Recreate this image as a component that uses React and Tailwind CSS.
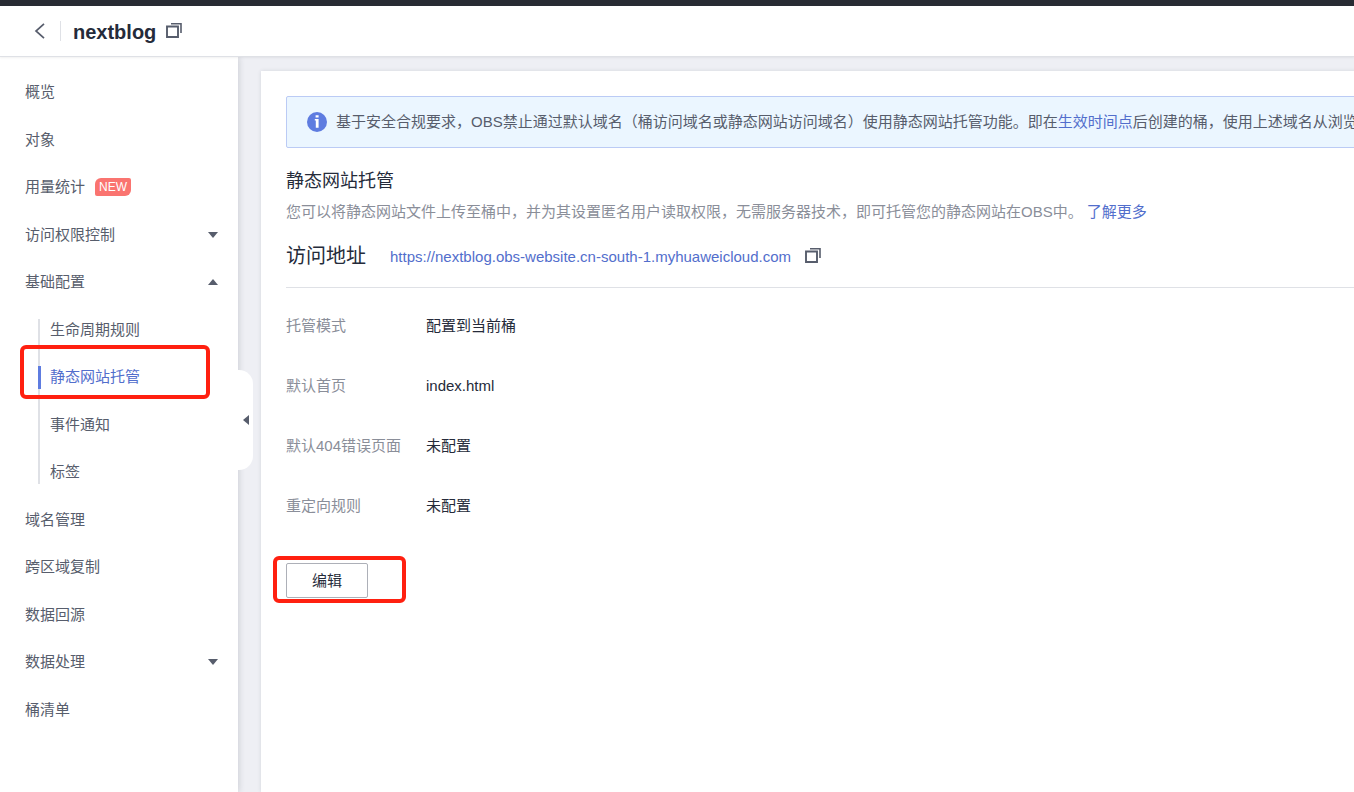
import { useState } from "react";

const NAV_ITEMS = [
  { label: "概览" },
  { label: "对象" },
  { label: "用量统计", isNew: true },
  { label: "访问权限控制", expandable: true },
  {
    label: "基础配置",
    expandable: true,
    children: ["生命周期规则", "静态网站托管", "事件通知", "标签"],
  },
  { label: "域名管理" },
  { label: "跨区域复制" },
  { label: "数据回源" },
  { label: "数据处理", expandable: true },
  { label: "桶清单" },
];

const SETTINGS = [
  { label: "托管模式", value: "配置到当前桶" },
  { label: "默认首页", value: "index.html" },
  { label: "默认404错误页面", value: "未配置" },
  { label: "重定向规则", value: "未配置" },
];

const SITE_URL = "https://nextblog.obs-website.cn-south-1.myhuaweicloud.com";

function CopyIcon() {
  return (
    <svg className="block w-4 h-4" viewBox="0 0 16 16" fill="none" stroke="#575d6c">
      <path d="M1 3.5h11v10.5H1z" strokeWidth="1.9" />
      <path d="M5 .8h10v9.2" strokeWidth="1.6" />
    </svg>
  );
}

function Caret({ up }) {
  return (
    <svg className="w-[10px] h-[6px]" viewBox="0 0 10 6" fill="#575d6c">
      {up ? <path d="M5 0l5 6H0z" /> : <path d="M0 0h10L5 6z" />}
    </svg>
  );
}

function Header() {
  return (
    <header className="relative z-20 flex items-center h-[51px] pl-8 bg-white border-b border-[#dfe1e6] shadow-[0_1px_2px_rgba(0,0,0,0.06)]">
      <button type="button" aria-label="返回" className="w-4 h-4">
        <svg className="block w-4 h-4" viewBox="0 0 16 16" fill="none" stroke="#575d6c" strokeWidth="1.7">
          <path d="M12 .8L4 8l8 7.2" />
        </svg>
      </button>
      <span className="w-px h-5 ml-3 mr-3 bg-[#dfe1e6]" />
      <h1 className="pt-[2px] text-[20px] leading-6 font-bold text-[#252b3a]">nextblog</h1>
      <button type="button" aria-label="复制桶名" className="ml-[10px]">
        <CopyIcon />
      </button>
    </header>
  );
}

function SubNav({ items, active, onSelect }) {
  return (
    <ul className="relative ml-[38px]">
      {/* Guide line on the left of the second level */}
      <li aria-hidden="true" className="absolute left-0 top-[13px] bottom-[12px] w-[2px] bg-[#dfe1e6]" />
      {items.map((label) => {
        const isActive = label === active;
        return (
          <li key={label} className="relative flex items-center h-12 even:h-[47px]">
            {isActive && <span className="absolute left-0 w-[3px] h-[23px] bg-[#5e7ce0]" />}
            <a
              href="#"
              onClick={() => onSelect(label)}
              className={`pl-3 ${isActive ? "text-[#526ecc]" : "text-[#575d6c]"}`}
            >
              {label}
            </a>
            {isActive && (
              <span className="absolute -left-[18px] -top-2 w-[190px] h-[54px] rounded-md border-4 border-[#ff2010]" />
            )}
          </li>
        );
      })}
    </ul>
  );
}

function Sidebar() {
  const [active, setActive] = useState("静态网站托管");
  const [open, setOpen] = useState("基础配置");

  return (
    <aside className="relative z-10 shrink-0 w-[238px] pt-[11px] bg-white shadow-[1px_0_6px_rgba(37,43,58,0.16)]">
      <nav>
        <ul>
          {NAV_ITEMS.map((item) => (
            <li key={item.label} className="group">
              <div className="flex items-center h-12 group-even:h-[47px] pl-[25px] pr-5 text-[#575d6c]">
                {item.expandable ? (
                  <button
                    type="button"
                    onClick={() => setOpen(open === item.label ? "" : item.label)}
                    className="flex items-center justify-between w-full"
                  >
                    {item.label}
                    <Caret up={open === item.label} />
                  </button>
                ) : (
                  <a href="#">{item.label}</a>
                )}
                {item.isNew && (
                  <span className="ml-[10px] px-1 h-[18px] rounded-tl-md rounded-br-md rounded-tr-xs rounded-bl-xs bg-[#fa7470] text-[12px] leading-[18px] text-white">
                    NEW
                  </span>
                )}
              </div>
              {item.children && open === item.label && (
                <SubNav items={item.children} active={active} onSelect={setActive} />
              )}
            </li>
          ))}
        </ul>
      </nav>

      {/* Collapse handle hanging off the edge */}
      <button
        type="button"
        aria-label="收起菜单"
        className="absolute left-full top-[313px] flex items-center pl-[5px] w-[15px] h-[100px] rounded-r-[14px] bg-white"
      >
        <svg className="w-[6px] h-[10px]" viewBox="0 0 6 10" fill="#575d6c">
          <path d="M6 0v10L0 5z" />
        </svg>
      </button>
    </aside>
  );
}

function Notice() {
  return (
    <div className="flex items-center h-[52px] pl-5 rounded-xs border border-[#bbcbf5] bg-[#ebf6ff] text-[#575d6c] whitespace-nowrap">
      <svg className="shrink-0 w-5 h-5 mr-[9px]" viewBox="0 0 20 20">
        <circle cx="10" cy="10" r="10" fill="#5e7ce0" />
        <path d="M8.6 3.2h3v2.4h-3zM7.8 7h3.8v8.8H8.8V8.4h-1z" fill="#fff" />
      </svg>
      <p>
        基于安全合规要求，OBS禁止通过默认域名（桶访问域名或静态网站访问域名）使用静态网站托管功能。即在
        <a href="#" className="text-[#526ecc]">生效时间点</a>
        后创建的桶，使用上述域名从浏览
      </p>
    </div>
  );
}

export default function App() {
  return (
    <div
      lang="zh-CN"
      className="flex flex-col min-h-screen overflow-hidden bg-[#eeeff4] border-t-6 border-[#282b33] text-[15px] leading-5 font-['Liberation_Sans','Noto_Sans_CJK_SC',sans-serif]"
    >
      <Header />
      <div className="flex flex-1">
        <Sidebar />
        <main className="flex-1 min-w-0 pl-[23px] pt-[14px] flex">
          <section className="shrink-0 w-full min-w-[1200px] px-[25px] pt-[25px] bg-white shadow-[0_0_4px_rgba(37,43,58,0.12)]">
            <Notice />

            <h2 className="mt-[21px] text-[18px] leading-6 text-[#252b3a]">静态网站托管</h2>
            <p className="mt-[9px] text-[#8a8e99]">
              您可以将静态网站文件上传至桶中，并为其设置匿名用户读取权限，无需服务器技术，即可托管您的静态网站在OBS中。
              <a href="#" className="ml-1 text-[#526ecc]">了解更多</a>
            </p>

            <div className="flex items-center mt-[22px] pb-[19px] border-b border-[#dfe1e6]">
              <h2 className="text-[20px] leading-6 text-[#252b3a]">访问地址</h2>
              <a href={SITE_URL} className="ml-6 pt-[2px] text-[#526ecc]">{SITE_URL}</a>
              <button type="button" aria-label="复制访问地址" className="ml-[14px]">
                <CopyIcon />
              </button>
            </div>

            <dl className="mt-7 flex flex-col gap-10">
              {SETTINGS.map(({ label, value }) => (
                <div key={label} className="flex">
                  <dt className="w-[140px] text-[#8a8e99]">{label}</dt>
                  <dd className="text-[#252b3a]">{value}</dd>
                </div>
              ))}
            </dl>

            <div className="relative mt-[47px] w-fit">
              <button
                type="button"
                className="block w-[82px] h-[35px] rounded-xs border border-[#adb0b8] bg-white text-[#252b3a]"
              >
                编辑
              </button>
              <span className="absolute -left-[13px] -top-[7px] w-[133px] h-[47px] rounded-md border-4 border-[#ff2010]" />
            </div>
          </section>
        </main>
      </div>
    </div>
  );
}
